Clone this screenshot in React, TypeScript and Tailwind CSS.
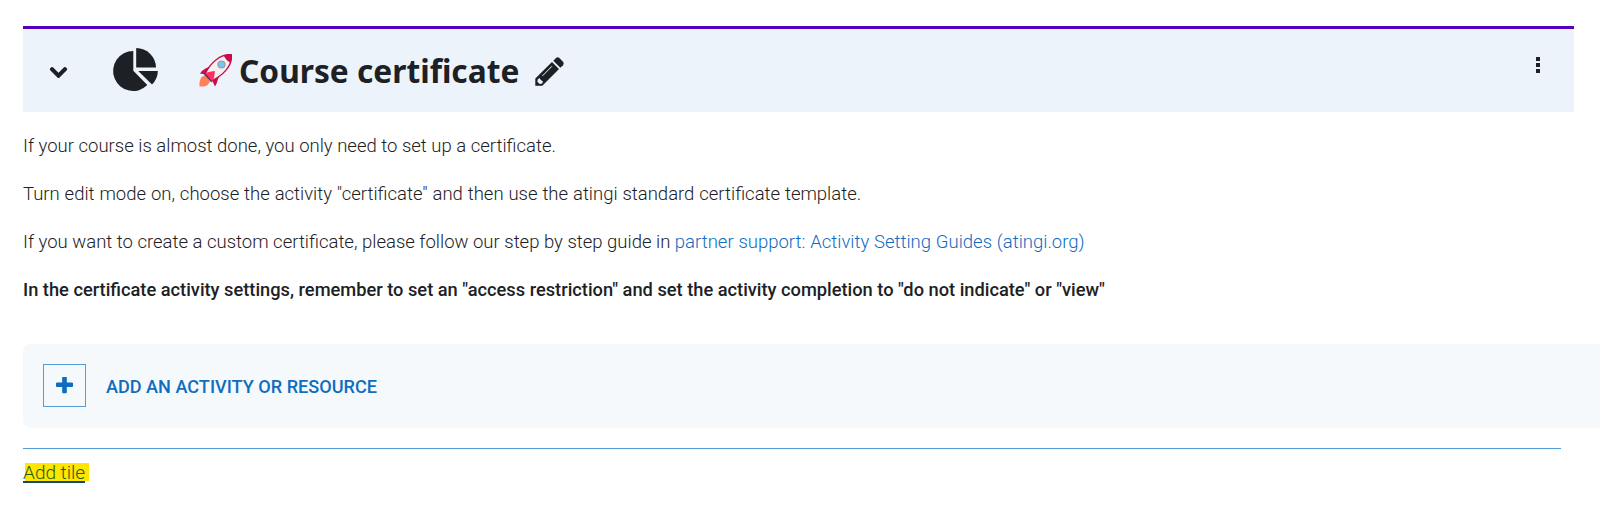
import React from 'react';
import { FaChevronDown } from 'react-icons/fa';

/**
 * Rocket drawn in front of the section title
 */
const RocketIcon: React.FC = () => (
  <svg viewBox="0 0 33 33" className="w-[33px] h-[33px] shrink-0">
    <path d="M7 21C2 22 0 26 0.500 32.500C6 33 9 32 11 27Z" fill="#ff8155" />
    <path d="M13 11.500L6.500 14.500Q2 17 1 19.500L9 21ZM21.500 20L19 25Q18 30 16 32.500L12 24Z" fill="#c90b4b" />
    <path d="M5 20.500L12.500 28.500L14.500 26L7.500 18.500Z" fill="#553b69" />
    <path d="M32.300 0.700C22 -0.500 11 9 6.500 19.500L13 26.500C23 22 34 12 32.300 0.700Z" fill="#f3f1ef" stroke="#c90b4b" strokeWidth="1.300" />
    <path d="M24.500 1.500Q29 0 32.500 0.500Q33 5 31.500 9Q27 6.500 24.500 1.500Z" fill="#c90b4b" />
    <path d="M7 19.500L9 18L16 17L15 24L13 27Z" fill="#ff2e63" />
    <circle cx="22.500" cy="10.500" r="3.500" fill="#7cc5f3" stroke="#9b9b9b" strokeWidth="1.200" />
  </svg>
);

const PieIcon: React.FC = () => (
  <svg viewBox="0 0 45 43" className="mb-[2px] ml-[45px] h-[43px] w-[45px] overflow-visible" fill="currentColor">
    <path d="M20.300 3V22.700L34.300 37.100A20 20 0 1 1 20.300 3Z" />
    <path d="M23.200 0A20 20 0 0 1 43 19.600H23.200Z" />
    <path d="M25.300 23H44.900A20 20 0 0 1 39 36.500Z" />
  </svg>
);

const PencilIcon: React.FC = () => (
  <svg viewBox="0 0 29 29" className="ml-4 mt-px h-[29px] w-[29px]">
    <path d="M17 5L24 12L8.500 27.500L7.500 28.700H0.300V21.500Z" fill="#1d2125" />
    <path d="M18.300 3.700L21 1Q22.700 -0.400 24.400 1L28 4.800Q29.400 6.500 28 8.200L25.300 10.700Z" fill="#1d2125" />
    <path d="M2.700 22.500L4.500 21L5.600 22.700L7.900 24.500L7.300 26.500L4.600 27L2.400 24.800Z" fill="#ecf3fa" />
    <path d="M7.700 18.700L16.700 9.500" stroke="#ecf3fa" strokeWidth="1" strokeLinecap="round" />
  </svg>
);

const PlusIcon: React.FC = () => (
  <svg viewBox="192 192 1408 1408" className="w-[17px] h-[17px]" fill="currentColor">
    <path d="M1600 736v192q0 40-28 68t-68 28h-416v416q0 40-28 68t-68 28h-192q-40 0-68-28t-28-68v-416h-416q-40 0-68-28t-28-68v-192q0-40 28-68t68-28h416v-416q0-40 28-68t68-28h192q40 0 68 28t28 68v416h416q40 0 68 28t28 68z" />
  </svg>
);

const SectionHeader: React.FC = () => (
  <header className="flex h-[86px] w-[1551px] items-center border-t-[3px] border-[#5400c0] bg-[#ecf3fa] text-[#1d2125]">
    <FaChevronDown className="mt-[3px] ml-[26px] h-[19px] w-[19px] stroke-current stroke-[32px]" />
    <PieIcon />
    <div className="ml-[41px] flex items-center">
      <RocketIcon />
      <h2 className="ml-[7px] w-[280px] whitespace-nowrap font-['Noto_Sans'] text-[31.7px] leading-[40px] font-bold">Course certificate</h2>
      <PencilIcon />
    </div>
    <div className="mr-[34px] mb-3 ml-auto flex flex-col gap-[2px]">
      <span className="size-1 bg-[#1d2125]" />
      <span className="size-1 bg-[#1d2125]" />
      <span className="size-1 bg-[#1d2125]" />
    </div>
  </header>
);

const App: React.FC = () => {
  return (
    <main className="h-[505px] w-[1600px] overflow-hidden bg-white pt-[26px] pl-[23px] font-['Roboto',sans-serif] text-[18px] leading-[28px] text-[#1d2125]">
      <SectionHeader />

      {/* Section summary */}
      <div className="mt-[20px] flex flex-col gap-[20px] whitespace-nowrap text-[18.5px] font-light">
        <p>If your course is almost done, you only need to set up a certificate.</p>
        <p className="[word-spacing:0.35px]">
          Turn edit mode on, choose the activity "certificate" and then use the atingi standard certificate template.
        </p>
        <p>
          <span>If you want to create a custom certificate, please follow our step by step guide in </span>
          <a className="text-[#0f6cbf] [word-spacing:0.3px]">partner support: Activity Setting Guides (atingi.org)</a>
        </p>
        <p className="text-[18.25px] font-medium">
          In the certificate activity settings, remember to set an "access restriction" and set the activity completion to "do not indicate" or "view"
        </p>
      </div>

      {/* Add activity */}
      <div className="mt-[40px] flex h-[84px] w-[1581px] items-start rounded-lg bg-[#f5f9fc] pt-5 pl-5 text-[#0f6cbf]">
        <div className="flex h-[43px] w-[43px] items-center justify-center border border-[#559dd8]">
          <PlusIcon />
        </div>
        <span className="mt-[9px] ml-[20px] text-[18.1px] font-medium">ADD AN ACTIVITY OR RESOURCE</span>
      </div>

      <div className="mt-5 h-px w-[1538px] bg-[#559dd8]" />
      <div className="mt-[14px] ml-[2px] flex h-[18px] w-[64px] items-center bg-[#ffe600]">
        <a className="mt-px -ml-[2px] h-5 border-b-2 border-[#17486b] text-[19px] leading-[20px] font-light text-[#285d16]">Add tile</a>
      </div>
    </main>
  );
};

export default App;
